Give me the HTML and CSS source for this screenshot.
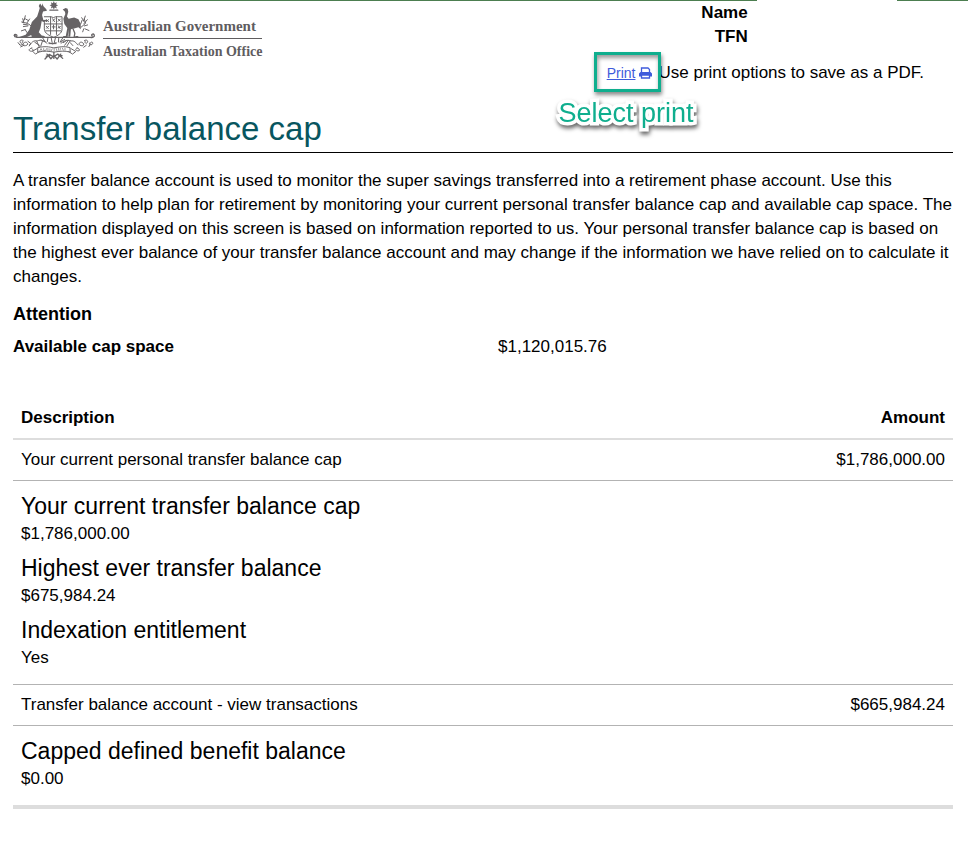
FILE: index.html
```html
<!DOCTYPE html>
<html lang="en">
<head>
<meta charset="utf-8">
<meta name="viewport" content="width=device-width, initial-scale=1">
<title>Transfer balance cap</title>
<link rel="stylesheet" href="styles.css">
</head>
<body>
<div class="top-rule"><span class="rule-main"></span><span class="rule-end"></span></div>
<div class="page">
  <header class="header">
    <div class="brand">
      <svg class="crest" viewBox="39 3 252 183" fill="none" stroke="#666365" stroke-width="3" stroke-linecap="round" stroke-linejoin="round" aria-hidden="true">
        <path fill="#666365" stroke="none" d="M163 3l3 7 6-3-2 7 6 2-6 3 2 7-6-3-3 6-3-6-6 3 2-7-6-3 6-2-2-7 6 3z"/>
        <path d="M151 31h5m3 0h6m3 0h7" stroke-width="4"/>
        <path fill="#666365" stroke="none" d="M121 11l6 8 0-9 5 10 8 8 2 5-12 2-3 11 4 15 10-1 2 4-12 3-5-3-4 22-5 12 9 10 9 2v4H96l-2-7-16 7-27 1 26-9 11-15 8-24 16-17 5-15 3-11-3-6z"/>
        <path fill="#666365" stroke="none" d="M190 29l9-5 6 3 2 9-4 14 5 7 17-4 13 6 7 14 0 16-7-6-13 4-10 2-2 23h-6l2-22-4 22h-6l5-27-9-12-3-16 6-14-1-7z"/>
        <path d="M222 89l5 12-2 12m5-1h6M193 112h10" stroke-width="4"/>
        <path d="M134 51h20q8 5 15 0h19v37c0 15-14 20-25 26-14-6-29-12-29-26V65"/>
        <path d="M134 73h54M153 51v54M171 51v54M138 94h46" stroke-width="3"/>
        <path d="M140 60l7 6m0-6l-7 6M159 57l6 9m1-9l-6 7M176 58l7 7m0-7l-7 7M140 80l6 7m1-7l-6 6M158 82h9m-5-6v12M177 79l5 8m1-6l-7 4" stroke-width="3"/>
        <path d="M42 108c2-5 10-2 8 2-4 5-9 1-5-2M50 114h230M280 110c-5-5 3-9 6-4s-5 10-11 8" stroke-width="4"/>
        <g stroke-width="3">
          <path d="M98 84C87 70 78 70 65 67m7 3-4-13m6 0-6 12m8-21-3 12m8 10 8-12m-12 0 9 5m-16 11 14 2m-14 5 14-2m-8 11-12 4m12-3 5 8M246 83l14-12-4-13m3-9-5 14m-6-9 8 13m9-7-10 12m-6-10-4 11m11 6 10-3m-8 12 12 5m-16-5-3 9"/>
          <path d="M70 124c-6-5-13 0-9 6 4 5 10-1 6-4M80 138c-10 5-14-2-9-7s14-2 12 5M96 146c-9 3-12 8-4 10s10-5 4-8M72 138l-10 5M54 130l6 8 8-2M84 126l8 6-4 8"/>
          <path d="M256 124c6-5 13 0 9 6-4 5-10-1-6-4M243 138c10 5 14-2 9-7s-14-2-12 5M275 130c5-5 9 1 5 5s-11 1-8-4M270 142l4-8M234 146c9 3 10 10 2 9s-8-6-2-9M262 138l-8 6"/>
          <path d="M90 137c7-11 13-14 22-12 13-6 22 0 30 7m43 0c9-8 19-12 30-7 10-2 15 4 21 12m-131-8 14 9m-8-12 8 18m9-18-5 15m69-11 9-6m-5 14 11-15m-4 17 10-16m0 6 8 9"/>
        </g>
        <path d="M115 145c23-5 33-2 48 1 18-3 31-6 49-1l1 14c-17-5-32-3-50 0-15-3-30-5-48 0zM112 148l-14 8 9 9 12-8M215 148l15 9-10 8-12-8" stroke-width="3"/>
        <path d="M121 154l3-6 3 6m5-6v6h3m6-6-3 6m7-6v6m6-5v6m7-6-3 6m9-7v6m6-6 2 6m5-7v6m6-6-1 6m7-6 3 6m5-6v6" stroke-width="2"/>
        <path d="M136 180l13-14 13 7 13-8 15 13M142 165l12 14 9-10 10 11 11-15M163 159v19M150 170l-10 1m38-1 10 0" stroke-width="4"/>
        <path d="M129 116l8 12-13-6m21-7-2 12m12-12 3 16m10-16-4 16m14-16-1 13m13-12-8 12m14-8-13 8m-35 2 11 4 11-4m-22 3h22" stroke-width="3"/>
      </svg>
      <div class="brand-text">
        <span class="brand-gov">Australian Government</span>
        <span class="brand-office">Australian Taxation Office</span>
      </div>
    </div>
    <div class="meta">
      <dl class="identity">
        <dt>Name</dt><dd></dd>
        <dt>TFN</dt><dd></dd>
      </dl>
      <div class="print-row">
        <span class="print-target">
          <a class="print-link" href="#"><span class="print-label">Print</span>
            <svg class="printer" viewBox="0 0 13 12" aria-hidden="true"><path d="M2.500 5.500V1H9l1.500 1.500v3M2.500 8h8v3h-8z" fill="#fff" stroke="#3f5bdb" stroke-width="1.300"/><path d="M1.500 5h10L13 6.500V9.500h-2V8H2v1.500H0v-3z" fill="#3f5bdb"/></svg>
          </a>
          <span class="callout-box"></span>
          <span class="callout-text">Select print</span>
        </span>
        <span>Use print options to save as a PDF.</span>
      </div>
    </div>
  </header>
  <main>
    <h1>Transfer balance cap</h1>
    <p class="intro">A transfer balance account is used to monitor the super savings transferred into a retirement phase account. Use this information to help plan for retirement by monitoring your current personal transfer balance cap and available cap space. The information displayed on this screen is based on information reported to us. Your personal transfer balance cap is based on the highest ever balance of your transfer balance account and may change if the information we have relied on to calculate it changes.</p>
    <h2 class="attention">Attention</h2>
    <dl class="space">
      <dt>Available cap space</dt>
      <dd>$1,120,015.76</dd>
    </dl>
    <table class="balances">
      <thead>
        <tr><th scope="col">Description</th><th scope="col" class="amount">Amount</th></tr>
      </thead>
      <tbody>
        <tr><td>Your current personal transfer balance cap</td><td class="amount">$1,786,000.00</td></tr>
        <tr class="detail"><td colspan="2">
          <dl>
            <dt>Your current transfer balance cap</dt><dd>$1,786,000.00</dd>
            <dt>Highest ever transfer balance</dt><dd>$675,984.24</dd>
            <dt>Indexation entitlement</dt><dd>Yes</dd>
          </dl>
        </td></tr>
        <tr><td>Transfer balance account - view transactions</td><td class="amount">$665,984.24</td></tr>
        <tr class="detail"><td colspan="2">
          <dl>
            <dt>Capped defined benefit balance</dt><dd>$0.00</dd>
          </dl>
        </td></tr>
      </tbody>
    </table>
  </main>
</div>
</body>
</html>
```
FILE: styles.css
```css
* { box-sizing: border-box; }

body {
  margin: 0;
  background: #fff;
  color: #000;
  font: 17px/24px "Liberation Sans", Arial, sans-serif;
}

h1, h2, p, dl, dd { margin: 0; }

.top-rule {
  display: flex;
  gap: 140px;
  height: 1px;
}
.rule-main, .rule-end { background: #4c7e50; }
.rule-main { flex: 757; }
.rule-end { flex: 71; }

.page { padding: 0 15px 32px 13px; }

.header {
  display: flex;
  justify-content: space-between;
  align-items: flex-start;
}

.brand {
  display: flex;
  gap: 7px;
}
.crest {
  width: 83px;
  height: 60px;
}
.brand-text {
  display: flex;
  flex-direction: column;
  padding-top: 13px;
  color: #5f5d5f;
  font-family: "Liberation Serif", "Times New Roman", serif;
  font-weight: bold;
  white-space: nowrap;
}
.brand-gov {
  border-bottom: 1px solid #5f5d5f;
  font-size: 15px;
}
.brand-office {
  padding-top: 1px;
  font-size: 14px;
}

.meta { padding-right: 29px; }
.identity {
  display: grid;
  grid-template-columns: 154px 1fr;
  grid-auto-rows: 24px;
  font-weight: bold;
  text-align: right;
}
.print-row {
  display: flex;
  align-items: center;
  margin-top: 12px;
  white-space: nowrap;
}
.print-target {
  position: relative;
  display: flex;
  padding: 0 6px 0 13px;
}
.print-link {
  display: flex;
  align-items: center;
  gap: 4px;
  color: #3f5bdb;
  font-size: 14px;
  text-decoration: none;
}
.print-label { text-decoration: underline; }
.printer {
  width: 13px;
  height: 12px;
}
.callout-box {
  position: absolute;
  inset: -9px -3px -7px 0;
  border: 3px solid #0fae8e;
  box-shadow: 1px 3px 4px rgba(0, 0, 0, .45), inset 1px 3px 4px rgba(0, 0, 0, .4);
  pointer-events: none;
}
.callout-text {
  position: absolute;
  top: 36px;
  right: -35px;
  color: #0fae8e;
  font-size: 27px;
  line-height: 32px;
  -webkit-text-stroke: 7px #fff;
  paint-order: stroke fill;
  stroke-linejoin: round;
  filter: drop-shadow(1px 3px 2px rgba(0, 0, 0, .6));
  pointer-events: none;
}

h1 {
  margin-top: 24px;
  padding-bottom: 3px;
  border-bottom: 1px solid #000;
  color: #08565f;
  font-size: 33px;
  font-weight: normal;
  line-height: 40px;
}
.intro { margin-top: 16px; }
.attention {
  margin-top: 13px;
  font-size: 18px;
  line-height: 24px;
}
.space {
  display: grid;
  grid-template-columns: 1fr 1fr;
  margin-top: 9px;
}
.space dt { font-weight: bold; }
.space dd { padding-left: 15px; }

.balances {
  width: 100%;
  margin-top: 39px;
  border-spacing: 0;
  border-bottom: 4px solid #ddd;
}
th, td {
  padding: 8px;
  text-align: left;
}
th { border-bottom: 2px solid #ddd; }
td { border-bottom: 1px solid #b3b3b3; }
.amount { text-align: right; }
.detail td { padding: 10px 8px 14px; }
.detail:last-child td { border-bottom: 0; }
.detail dt {
  font-size: 23px;
  line-height: 31px;
}
.detail dd + dt { margin-top: 7px; }
```
